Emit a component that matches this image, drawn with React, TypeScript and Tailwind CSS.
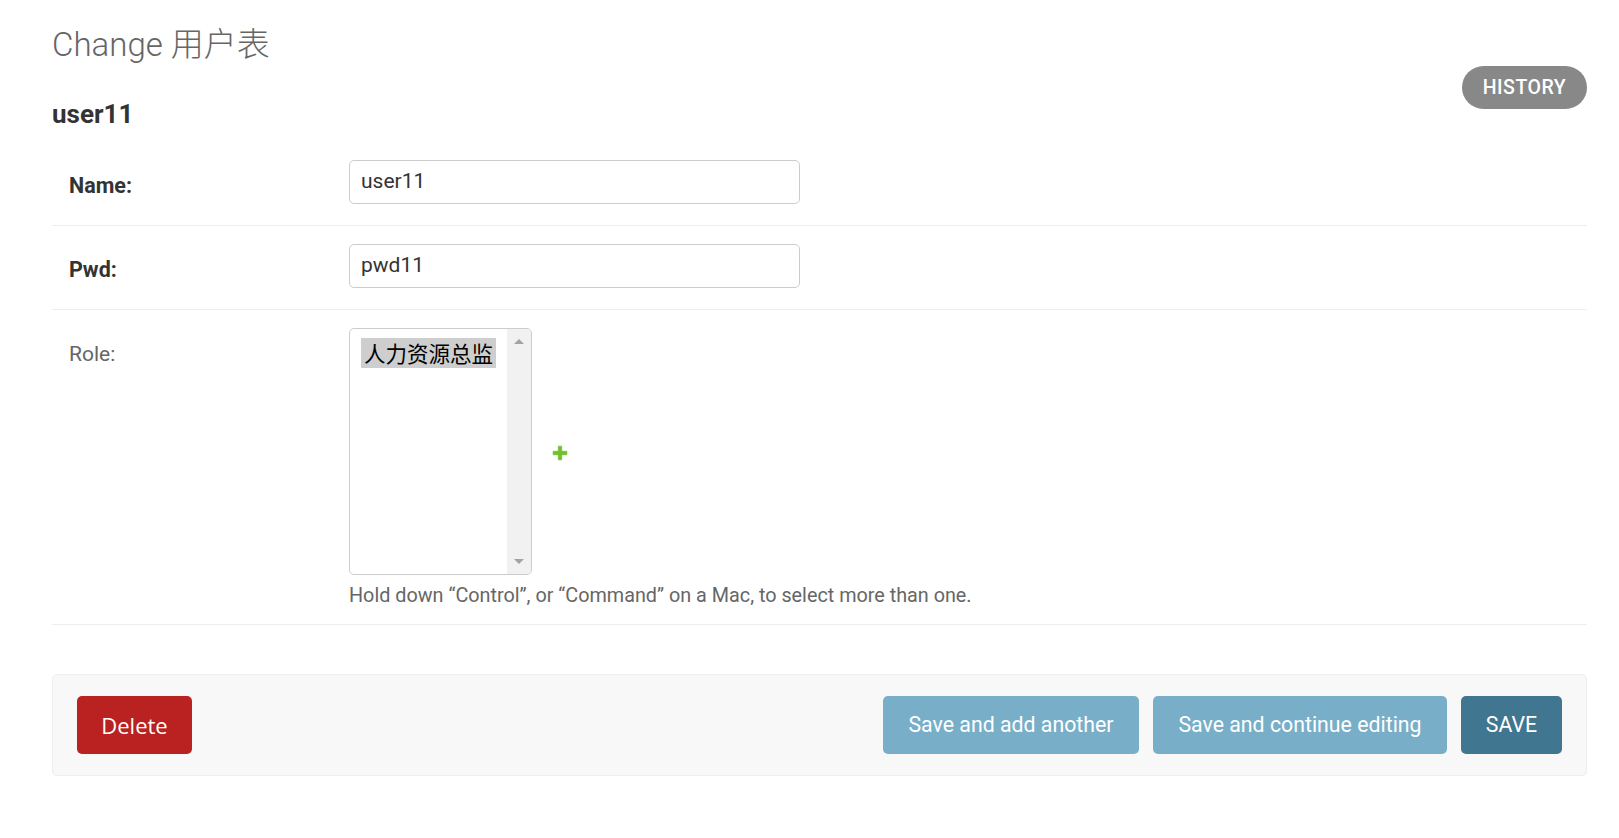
import React from 'react'

const fields = [
    { label: 'Name:', value: 'user11' },
    { label: 'Pwd:', value: 'pwd11' },
]

function AddIcon() {
    return (
        <svg width="16" height="16" viewBox="0 0 14 14" className="block">
            <path d="M5.5 1h3v4.5H13v3H8.5V13h-3V8.5H1v-3h4.5z" fill="#70bf2b" stroke="#70bf2b" strokeWidth="0.6" strokeLinejoin="round" />
        </svg>
    )
}

export default function App() {
    return (
        <div className="min-h-[838px] bg-white font-['Roboto',sans-serif] text-[#333]">
            <div className="pl-[52px] pr-[32px] pt-[23px]">
                <h1 className="text-[33px] font-light leading-[44px] text-[#666] font-['Roboto','Noto_Sans_CJK_SC',sans-serif]">
                    Change 用户表
                </h1>

                <div className="flex items-start justify-between">
                    <h2 className="mt-[31px] text-[26px] font-bold leading-[32px] text-[#333]">user11</h2>
                    <button className="-mt-[1px] h-[43px] w-[125px] rounded-full bg-[#888] text-[19.5px] font-medium tracking-[0.5px] text-white">
                        HISTORY
                    </button>
                </div>

                <div className="mt-[12px]">
                    {fields.map((f) => (
                        <div key={f.label} className="flex border-b border-[#eee] pt-[18px] pb-[21px]">
                            <label className="w-[297px] shrink-0 pl-[17px] pt-[14px] text-[21.5px] font-bold leading-[24px] text-[#333]">
                                {f.label}
                            </label>
                            <div className="flex h-[44px] w-[451px] items-center rounded-[5px] border border-[#ccc] px-[11px] text-[21px] text-[#333]">
                                {f.value}
                            </div>
                        </div>
                    ))}

                    <div className="flex border-b border-[#eee] pt-[18px] pb-[17px]">
                        <label className="w-[297px] shrink-0 pl-[17px] pt-[14px] text-[21px] leading-[24px] text-[#666]">
                            Role:
                        </label>
                        <div>
                            <div className="flex items-center gap-[20px]">
                                <div className="flex h-[247px] w-[183px] overflow-hidden rounded-[5px] border border-[#ccc]">
                                    <div className="flex-1 pl-[11px] pt-[9px]">
                                        <div className="inline-block bg-[#cecece] px-[3px] text-[21.5px] leading-[30px] text-black font-['Noto_Sans_CJK_SC',sans-serif]">
                                            人力资源总监
                                        </div>
                                    </div>
                                    <div className="flex w-[24px] flex-col items-center justify-between bg-[#f1f1f1] py-[10px]">
                                        <span className="h-0 w-0 border-x-[5px] border-b-[5px] border-x-transparent border-b-[#a3a3a3]" />
                                        <span className="h-0 w-0 border-x-[5px] border-t-[5px] border-x-transparent border-t-[#a3a3a3]" />
                                    </div>
                                </div>
                                <div className="mt-[3px]">
                                    <AddIcon />
                                </div>
                            </div>
                            <p className="mt-[10px] text-[19.8px] leading-[22px] text-[#666]">
                                Hold down “Control”, or “Command” on a Mac, to select more than one.
                            </p>
                        </div>
                    </div>
                </div>

                <div className="mt-[49px] flex items-center justify-between rounded-[5px] border border-[#eee] bg-[#f8f8f8] px-[24px] py-[21px]">
                    <button className="h-[58px] w-[115px] rounded-[5px] bg-[#ba2121] text-[22px] text-white font-['Open_Sans',sans-serif]">
                        Delete
                    </button>
                    <div className="flex gap-[14px]">
                        <button className="h-[58px] w-[256px] rounded-[5px] bg-[#79aec8] text-[21.3px] text-white">
                            Save and add another
                        </button>
                        <button className="h-[58px] w-[294px] rounded-[5px] bg-[#79aec8] text-[21.3px] text-white">
                            Save and continue editing
                        </button>
                        <button className="h-[58px] w-[101px] rounded-[5px] bg-[#417690] text-[21.3px] text-white">
                            SAVE
                        </button>
                    </div>
                </div>
            </div>
        </div>
    )
}
